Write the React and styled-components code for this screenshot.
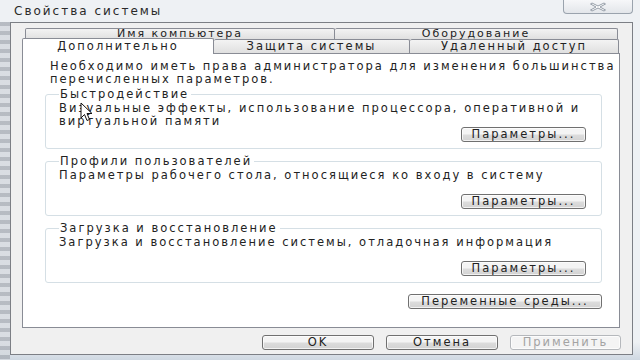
import React from "react"
import styled, { createGlobalStyle } from "styled-components"

const GlobalStyle = createGlobalStyle`
  html, body {
    margin: 0;
    padding: 0;
    background: #e4e8ed;
  }
  body {
    font-family: "DejaVu Sans", "Liberation Sans", sans-serif;
    font-size: 11.5px;
    letter-spacing: 2px;
    color: #222;
  }
`

const Screen = styled.div`
  position: relative;
  width: 640px;
  height: 360px;
  overflow: hidden;
  display: flex;
  flex-direction: column;
  background: linear-gradient(#eef1f4 0 95%, #cfd8e2);
`

const TitleBar = styled.div`
  height: 22px;
  flex: none;
  display: flex;
  justify-content: space-between;
  padding-left: 14px;
  padding-right: 7px;
`

const Title = styled.div`
  font-size: 12px;
  line-height: 22px;
  color: #2a2a2a;
`

const CloseBox = styled.div`
  width: 70px;
  height: 14px;
  box-sizing: border-box;
  border: 1px solid #9aa3ad;
  border-top: none;
  border-radius: 0 0 4px 4px;
  background: linear-gradient(#f6f7f9, #e3e6ea);
  display: flex;
  align-items: center;
  justify-content: center;
`

const Body = styled.div`
  flex: 1;
  display: flex;
  padding-right: 7px;
`

const FrameEdge = styled.div`
  width: 10px;
  flex: none;
  background: repeating-linear-gradient(#a9aeb6 0 4px, #d4d8de 4px 9px);
  opacity: 0.8;
`

const Dialog = styled.div`
  flex: 1;
  height: 333px;
  box-sizing: border-box;
  background: #f0f0f0;
  border: 1px solid #7c7f85;
  display: flex;
  flex-direction: column;
  padding: 5px 11px 0 11px;
`

const TabRow = styled.div`
  display: flex;
  flex: none;
  margin-left: ${p => p.$indent}px;
  width: ${p => p.$width}px;
  height: ${p => p.$height}px;
  position: relative;
  z-index: ${p => p.$z};
`

const Tab = styled.div`
  width: ${p => p.$width}px;
  box-sizing: border-box;
  border: 1px solid #898c95;
  border-bottom: none;
  border-left-width: ${p => (p.$first ? 1 : 0)}px;
  background: ${p => (p.$active ? "#fff" : "linear-gradient(#f3f3f3, #e0e0e0)")};
  text-align: center;
  font-size: ${p => (p.$top ? 11 : 11.5)}px;
  line-height: ${p => (p.$active ? 14 : p.$top ? 10 : 12)}px;
  margin-top: ${p => (p.$active ? -1 : 0)}px;
  height: ${p => (p.$active ? 16 : p.$top ? 11 : 14)}px;
  overflow: hidden;
  border-radius: 2px 2px 0 0;
`

const Panel = styled.div`
  height: 275px;
  box-sizing: border-box;
  margin-right: 1px;
  background: #fff;
  border: 1px solid #898c95;
  padding: 6px 17px 0 22px;
  display: flex;
  flex-direction: column;
`

const Intro = styled.p`
  margin: 0 -16px 2px 5px;
  line-height: 13px;
`

const Group = styled.fieldset`
  margin: 0 0 6px 0;
  padding: 0 15px 6px 13px;
  border: 1px solid #d5dfe5;
  border-radius: 3px;
  min-width: 0;
`

const Legend = styled.legend`
  padding: 0 2px 0 1px;
  margin-left: 0;
  line-height: 13px;
`

const GroupText = styled.div`
  height: 26px;
  line-height: 12.5px;
  padding-top: 1px;
  box-sizing: border-box;
`

const Button = styled.div`
  width: ${p => p.$width}px;
  height: 15px;
  box-sizing: border-box;
  border: 1px solid ${p => (p.$disabled ? "#b5b8bc" : "#707070")};
  border-radius: 3px;
  background: ${p =>
    p.$disabled ? "#f4f4f4" : "linear-gradient(#f4f4f4 0 45%, #dcdcdc 55%, #d2d2d2)"};
  color: ${p => (p.$disabled ? "#a3a3a3" : "#222")};
  text-align: center;
  line-height: 13px;
  font-size: 11.5px;
  box-shadow: inset 0 0 0 1px rgba(255, 255, 255, 0.7);
`

const ButtonRow = styled.div`
  display: flex;
  justify-content: flex-end;
  margin-top: ${p => p.$top || 0}px;
  gap: 12px;
`

const Footer = styled.div`
  display: flex;
  justify-content: flex-end;
  gap: 12px;
  padding-top: 7px;
`

const Cursor = styled.svg`
  position: absolute;
  left: 80px;
  top: 102px;
`

const groups = [
  {
    title: "Быстродействие",
    text: "Визуальные эффекты, использование процессора, оперативной и виртуальной памяти",
  },
  {
    title: "Профили пользователей",
    text: "Параметры рабочего стола, относящиеся ко входу в систему",
  },
  {
    title: "Загрузка и восстановление",
    text: "Загрузка и восстановление системы, отладочная информация",
  },
]

export default function App() {
  return (
    <Screen>
      <GlobalStyle />
      <TitleBar>
        <Title>Свойства системы</Title>
        <CloseBox>
          <svg width="18" height="10" viewBox="0 0 18 10">
            <path
              d="M3 1 L9 4 L15 1 L16.5 2 L11 5 L16.5 8 L15 9 L9 6 L3 9 L1.5 8 L7 5 L1.5 2 Z"
              fill="#fdfdfd"
              stroke="#7e8894"
              strokeWidth="0.8"
            />
          </svg>
        </CloseBox>
      </TitleBar>
      <Body>
        <FrameEdge />
        <Dialog>
          <TabRow $indent={3} $width={593} $height={11} $z={1}>
            <Tab $first $top $width={310}>Имя компьютера</Tab>
            <Tab $top $width={283}>Оборудование</Tab>
          </TabRow>
          <TabRow $indent={0} $width={597} $height={14} $z={2}>
            <Tab $first $active $width={192}>Дополнительно</Tab>
            <Tab $width={196}>Защита системы</Tab>
            <Tab $width={209}>Удаленный доступ</Tab>
          </TabRow>
          <Panel>
            <Intro>
              Необходимо иметь права администратора для изменения большинства
              перечисленных параметров.
            </Intro>
            {groups.map(g => (
              <Group key={g.title}>
                <Legend>{g.title}</Legend>
                <GroupText>{g.text}</GroupText>
                <ButtonRow>
                  <Button $width={125}>Параметры...</Button>
                </ButtonRow>
              </Group>
            ))}
            <ButtonRow $top={5}>
              <Button $width={194}>Переменные среды...</Button>
            </ButtonRow>
          </Panel>
          <Footer>
            <Button $width={112}>OK</Button>
            <Button $width={112}>Отмена</Button>
            <Button $width={111} $disabled>Применить</Button>
          </Footer>
        </Dialog>
      </Body>
      <Cursor width="13" height="20" viewBox="0 0 13 20">
        <path
          d="M1 1 L1 16 L4.5 12.5 L7 18.5 L9.5 17.5 L7 11.5 L12 11.5 Z"
          fill="#fff"
          stroke="#111"
          strokeWidth="1"
          strokeLinejoin="round"
        />
      </Cursor>
    </Screen>
  )
}
